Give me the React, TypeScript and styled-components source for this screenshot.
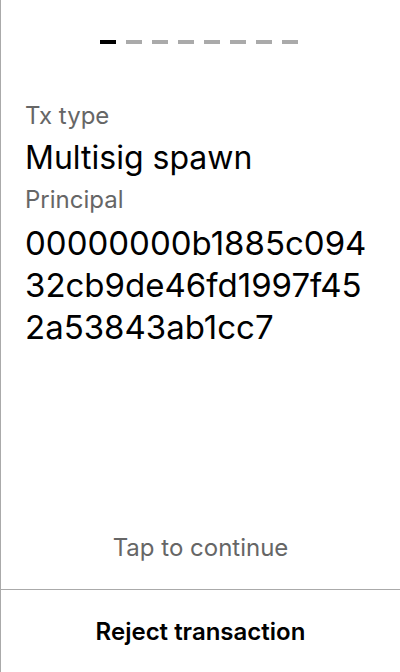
import React, { FunctionComponent } from 'react';
import styled, { createGlobalStyle } from 'styled-components';

const GlobalStyle = createGlobalStyle`
    html, body {
        margin: 0;
        padding: 0;
        background: #fff;
    }
    body {
        font-family: Inter, "Noto Sans", sans-serif;
    }
`;

const Screen = styled.div`
    box-sizing: border-box;
    width: 400px;
    height: 672px;
    border-left: 1px solid #aaa;
    display: flex;
    flex-direction: column;
`;

const Steps = styled.div`
    display: flex;
    justify-content: center;
    gap: 10px;
    padding-top: 40px;
    padding-right: 3px;
`;

interface DashProps {
    active: boolean;
}

const Dash = styled.div<DashProps>`
    width: 16px;
    height: 4px;
    background: ${(p) => p.active ? '#000' : '#aaa'};
`;

const Body = styled.div`
    flex: 1;
    padding: 56px 24px 0 24px;
`;

const Label = styled.div`
    font-size: 24px;
    line-height: 32px;
    color: #666;
`;

const Value = styled.div`
    font-size: 32px;
    line-height: 52px;
    color: #000;
`;

const Hash = styled.div`
    font-size: 33px;
    line-height: 42px;
    color: #000;
    margin-top: 6px;
    word-break: break-all;
`;

const Hint = styled.div`
    text-align: center;
    font-size: 24px;
    line-height: 30px;
    color: #666;
    padding-bottom: 26px;
`;

const RejectButton = styled.button`
    border: none;
    border-top: 1px solid #aaa;
    background: transparent;
    height: 83px;
    padding: 0;
    font-family: inherit;
    font-size: 24px;
    font-weight: 600;
    color: #000;
`;

const steps = [true, false, false, false, false, false, false, false];

const App: FunctionComponent = () => (
    <Screen>
        <GlobalStyle/>
        <Steps>
            {steps.map((a, i) => <Dash key={i} active={a}/>)}
        </Steps>
        <Body>
            <Label>Tx type</Label>
            <Value>Multisig spawn</Value>
            <Label>Principal</Label>
            <Hash>00000000b1885c09432cb9de46fd1997f452a53843ab1cc7</Hash>
        </Body>
        <Hint>Tap to continue</Hint>
        <RejectButton>Reject transaction</RejectButton>
    </Screen>
);

export default App;
